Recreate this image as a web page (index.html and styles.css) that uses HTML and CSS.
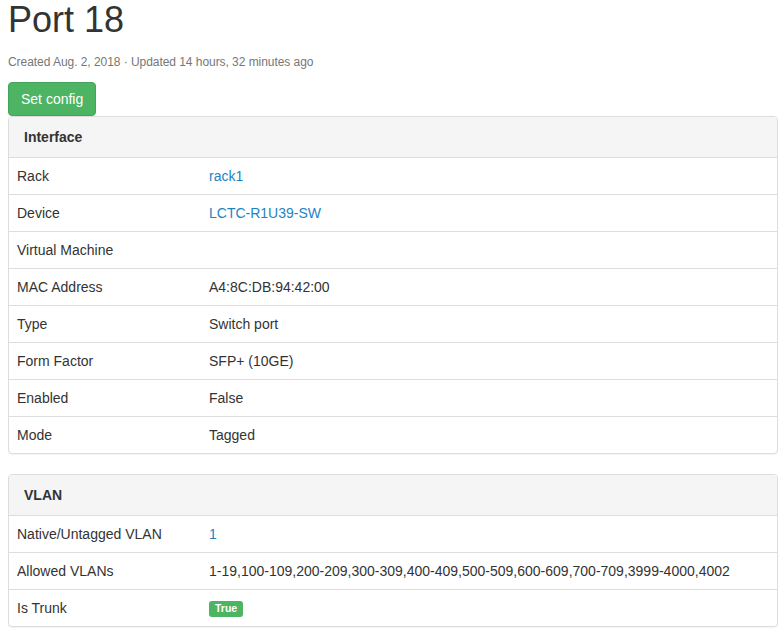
FILE: index.html
```html
<!DOCTYPE html>
<html>
<head>
<meta charset="utf-8">
<link rel="stylesheet" href="styles.css">
</head>
<body>
<div class="page">
  <h1 class="title">Port 18</h1>
  <p class="meta">Created Aug. 2, 2018 · Updated 14 hours, 32 minutes ago</p>
  <div class="actions"><button class="btn">Set config</button></div>

  <div class="panel">
    <div class="panel-heading"><strong>Interface</strong></div>
    <div class="rows">
      <div class="row"><div class="label-col">Rack</div><div class="val"><a href="#">rack1</a></div></div>
      <div class="row"><div class="label-col">Device</div><div class="val"><a href="#">LCTC-R1U39-SW</a></div></div>
      <div class="row"><div class="label-col">Virtual Machine</div><div class="val"></div></div>
      <div class="row"><div class="label-col">MAC Address</div><div class="val">A4:8C:DB:94:42:00</div></div>
      <div class="row"><div class="label-col">Type</div><div class="val">Switch port</div></div>
      <div class="row"><div class="label-col">Form Factor</div><div class="val">SFP+ (10GE)</div></div>
      <div class="row"><div class="label-col">Enabled</div><div class="val">False</div></div>
      <div class="row"><div class="label-col">Mode</div><div class="val">Tagged</div></div>
    </div>
  </div>

  <div class="panel">
    <div class="panel-heading"><strong>VLAN</strong></div>
    <div class="rows">
      <div class="row"><div class="label-col">Native/Untagged VLAN</div><div class="val"><a href="#">1</a></div></div>
      <div class="row"><div class="label-col">Allowed VLANs</div><div class="val">1-19,100-109,200-209,300-309,400-409,500-509,600-609,700-709,3999-4000,4002</div></div>
      <div class="row"><div class="label-col">Is Trunk</div><div class="val"><span class="badge">True</span></div></div>
    </div>
  </div>
</div>
</body>
</html>
```
FILE: styles.css
```css
* { box-sizing: border-box; }
html, body { margin: 0; padding: 0; background: #fff; }
body {
  font-family: "Liberation Sans", Arial, sans-serif;
  font-size: 14px;
  line-height: 20px;
  color: #333;
}
.page { width: 778px; padding-left: 8px; }
.title {
  margin: 0;
  font-size: 36px;
  font-weight: 500;
  line-height: 40px;
  color: #333;
}
.meta {
  margin: 14px 0 11px;
  font-size: 12px;
  line-height: 17px;
  color: #777;
  letter-spacing: -0.05px;
}
.actions { display: flex; }
.btn {
  font-family: inherit;
  font-size: 14px;
  line-height: 20px;
  padding: 6px 12px;
  color: #fff;
  background: #4cb463;
  border: 1px solid #43a55a;
  border-radius: 4px;
  height: 34px;
  white-space: nowrap;
  cursor: pointer;
}
.panel {
  border: 1px solid #ddd;
  border-radius: 4px;
  background: #fff;
  box-shadow: 0 1px 1px rgba(0,0,0,.05);
  margin-bottom: 20px;
  overflow: hidden;
}
.panel-heading {
  background: #f5f5f5;
  padding: 10px 15px;
  border-bottom: 1px solid #ddd;
}
.panel-heading strong { font-weight: 700; }
.row {
  display: flex;
  padding: 8px;
  border-top: 1px solid #ddd;
}
.row:first-child { border-top: 0; }
.label-col { width: 192px; flex: none; }
.val { flex: 1; }
a { color: #1d84c4; text-decoration: none; }
.badge {
  display: inline-block;
  background: #4cb463;
  color: #fff;
  font-size: 10.5px;
  font-weight: 700;
  line-height: 1;
  padding: 2px 6px 3px;
  border-radius: 3px;
  vertical-align: 1px;
}
```
